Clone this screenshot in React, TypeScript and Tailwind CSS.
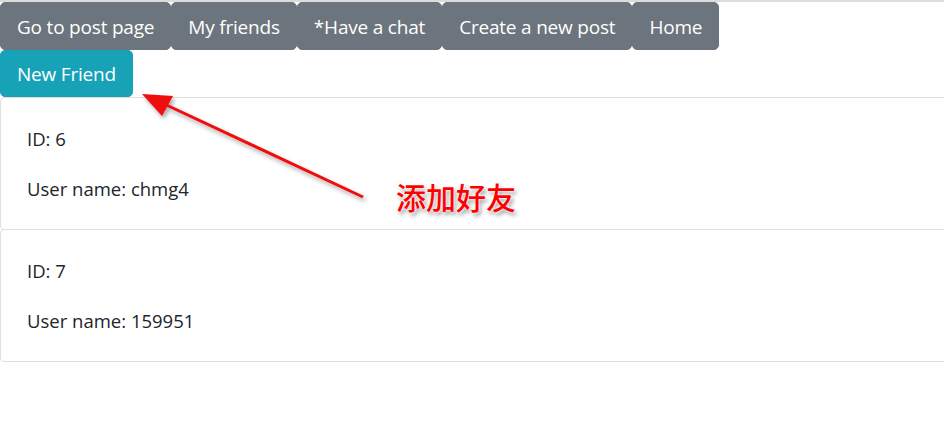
import React from "react";

const navButtons = ["Go to post page", "My friends", "*Have a chat", "Create a new post", "Home"];

const friends = [
  { id: 6, name: "chmg4" },
  { id: 7, name: "159951" },
];

export default function App() {
  return (
    <div className="relative w-[944px] h-[425px] bg-white overflow-hidden font-['Open_Sans',sans-serif] text-[#212529]">
      <div className="border-t-2 border-[#dcdcdc]"></div>

      <div className="flex">
        {navButtons.map((label) => (
          <button
            key={label}
            className="bg-[#6c757d] text-white text-[19px] tracking-[-0.2px] leading-[30px] px-4 pt-[9px] pb-[7px] rounded-[5px] border border-[#6c757d]"
          >
            {label}
          </button>
        ))}
      </div>

      <button className="bg-[#17a2b8] text-white text-[19px] tracking-[-0.2px] leading-[30px] px-4 py-[7.5px] rounded-[5px] border border-[#17a2b8]">
        New Friend
      </button>

      <div className="w-[960px]">
        {friends.map((f) => (
          <div key={f.id} className="border border-[#dfdfdf] rounded-[4px] px-[26px] pt-[26px] pb-[25px] -mb-px">
            <p className="text-[18.5px] leading-[30px]">ID: {f.id}</p>
            <p className="text-[18.5px] leading-[30px] mt-[20px]">User name: {f.name}</p>
          </div>
        ))}
      </div>

      {/* annotation overlay */}
      <svg className="absolute left-0 top-0" width="944" height="425">
        <defs>
          <filter id="sh" x="-20%" y="-20%" width="140%" height="140%">
            <feDropShadow dx="2" dy="3" stdDeviation="2" floodColor="#000" floodOpacity="0.35" />
          </filter>
        </defs>
        <g filter="url(#sh)">
          <line x1="363" y1="197" x2="160" y2="102" stroke="#f01010" strokeWidth="3" />
          <polygon points="142,94 173,96 162,116" fill="#f01010" />
        </g>
      </svg>
      <div className="absolute left-[396px] top-[177px] text-[30px] leading-[38px] font-medium text-[#ff0000] font-['Noto_Sans_CJK_SC',sans-serif] [text-shadow:0_0_2px_#fff,0_0_3px_#fff,2px_3px_4px_rgba(0,0,0,0.45)]">
        添加好友
      </div>
    </div>
  );
}
